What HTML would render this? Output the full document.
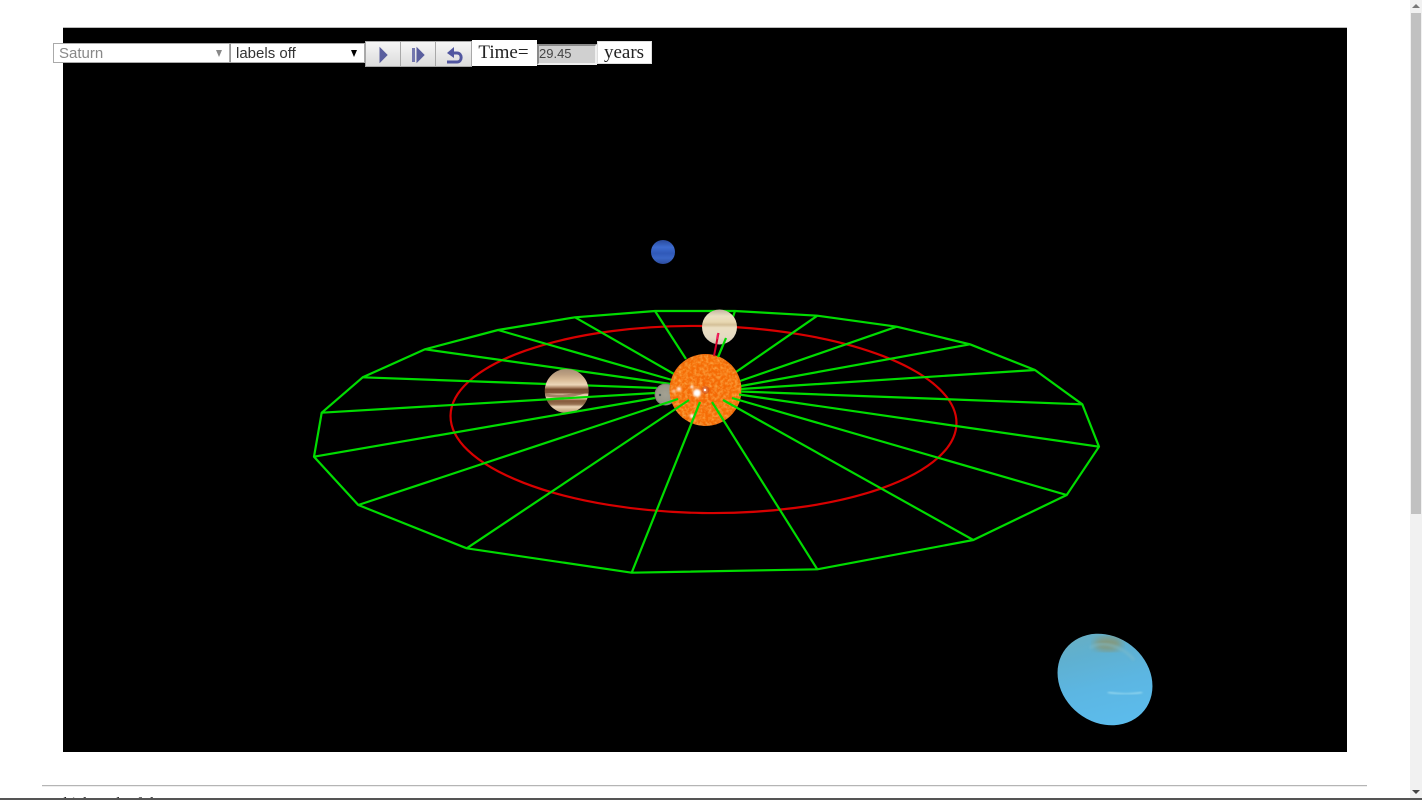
<!DOCTYPE html>
<html><head><meta charset="utf-8"><title>Solar system</title>
<style>
html,body{margin:0;padding:0;width:1422px;height:800px;overflow:hidden;background:#fff}
.a{position:absolute;box-sizing:border-box}
.sel{font:15px/20px "Liberation Sans",sans-serif;background:#fff;border:1px solid #aaa;height:20px;top:43px;padding-left:5px;color:#333}
.arr{position:absolute;top:6px;width:0;height:0;border-left:3.5px solid transparent;border-right:3.5px solid transparent;border-top:7px solid #000}
.btn{top:41px;height:26px;width:36px;background:linear-gradient(#f6f6f6,#dcdcdc);border:1px solid #a8a8a8}
.btn svg{position:absolute;left:0;top:0}
.lab{background:#fff;font:19px/24px "Liberation Serif",serif;color:#222;text-align:center}
</style></head><body>
<div class="a" style="left:63px;top:27px;width:1284px;height:1px;background:#bbb"></div>
<svg class="a" style="left:63px;top:28px;width:1284px;height:724px;background:#000;display:block" viewBox="63 28 1284 724" xmlns="http://www.w3.org/2000/svg">
<defs>
<filter id="sunf" x="0" y="0" width="100%" height="100%"><feTurbulence type="fractalNoise" baseFrequency="0.34" numOctaves="2" seed="4"/><feColorMatrix values="0 0 0 0 1  0 0 0 0 .6  0 0 0 0 .15  1.3 0 0 0 -.5"/></filter>
<radialGradient id="sung" cx=".5" cy=".5" r=".5"><stop offset="0" stop-color="#f46604"/><stop offset=".85" stop-color="#f66e06"/><stop offset="1" stop-color="#ee6806"/></radialGradient>
<clipPath id="sunc"><circle cx="705.5" cy="390" r="36"/></clipPath>
<clipPath id="jc"><circle cx="566.7" cy="391" r="22"/></clipPath>
<clipPath id="sc"><circle cx="719.5" cy="327" r="17.5"/></clipPath>
<clipPath id="uc"><ellipse cx="1105" cy="679.5" rx="50" ry="43" transform="rotate(38 1105 679.5)"/></clipPath>
<linearGradient id="jg" x1="0" y1="0" x2="0" y2="1">
<stop offset="0" stop-color="#a89078"/><stop offset=".12" stop-color="#bc9f80"/><stop offset=".24" stop-color="#d8ba96"/><stop offset=".36" stop-color="#ecd6b8"/><stop offset=".42" stop-color="#b08a6a"/><stop offset=".46" stop-color="#784c30"/><stop offset=".54" stop-color="#805438"/><stop offset=".58" stop-color="#e8d0b0"/><stop offset=".67" stop-color="#e0c4a2"/><stop offset=".72" stop-color="#84583a"/><stop offset=".8" stop-color="#967050"/><stop offset=".86" stop-color="#ecd6b8"/><stop offset="1" stop-color="#b09068"/>
</linearGradient>
<linearGradient id="sg" x1="0" y1="0" x2="0" y2="1">
<stop offset="0" stop-color="#bfb29c"/><stop offset=".2" stop-color="#ebe0c2"/><stop offset=".36" stop-color="#e8d8b2"/><stop offset=".44" stop-color="#d4c098"/><stop offset=".52" stop-color="#ebdfc2"/><stop offset=".8" stop-color="#e4d9c2"/><stop offset="1" stop-color="#cfc4b0"/>
</linearGradient>
<linearGradient id="ng" x1="0" y1="0" x2="0" y2="1">
<stop offset="0" stop-color="#2a4a9c"/><stop offset=".3" stop-color="#3e6cd0"/><stop offset=".55" stop-color="#3059b8"/><stop offset=".75" stop-color="#3a66c6"/><stop offset="1" stop-color="#2c4c9e"/>
</linearGradient>
<linearGradient id="ug" x1=".35" y1="0" x2=".6" y2="1">
<stop offset="0" stop-color="#6aaec0"/><stop offset=".25" stop-color="#5fb0d0"/><stop offset=".55" stop-color="#5cb6e2"/><stop offset="1" stop-color="#5cbdee"/>
</linearGradient>
<radialGradient id="mg" cx=".5" cy=".5" r=".5"><stop offset="0" stop-color="#a3a192"/><stop offset=".85" stop-color="#989688"/><stop offset="1" stop-color="#77776c"/></radialGradient>
<filter id="b1"><feGaussianBlur stdDeviation="3.5"/></filter>
<filter id="b2"><feGaussianBlur stdDeviation="1"/></filter>
</defs>
<g style="filter:blur(.3px)">
<ellipse cx="703.5" cy="419.5" rx="253" ry="93.5" transform="rotate(.9 703.5 419.5)" fill="none" stroke="#d80000" stroke-width="2.2"/>
<g stroke="#00dc00" stroke-width="2.2" fill="none" stroke-linejoin="round">
<polygon points="655,311 735,311 817.3,315.7 896.7,326.7 970,344.3 1035,370 1082.3,404.3 1099,446.7 1066.7,495 973.3,540 817.3,569.3 631.7,572.7 466.7,548.3 358.3,505 314,456.7 321.7,412.7 362.7,377.3 425,349.3 498,330 575,317.3"/>
<path d="M362.7,377.3L657,388M425,349.3L671,384M498,330L672,380M575,317.3L674,374M655,311L686,359M735,311L726,338L718,357M817.3,315.7L736,372M896.7,326.7L740,381M970,344.3L741,386M1035,370L741,389"/>
</g>
<g clip-path="url(#jc)">
<rect x="544" y="369" width="46" height="44" fill="url(#jg)"/>
<path d="M544,393C555,396 578,395 590,388L590,391C578,398 555,399 544,396Z" fill="#7c5238" opacity=".6"/>
</g>
<circle cx="665.5" cy="394.5" r="11" fill="url(#mg)"/>
<circle cx="660" cy="395" r="1.2" fill="#4a5a5a"/>
<circle cx="705.5" cy="390" r="36" fill="url(#sung)"/>
<g clip-path="url(#sunc)"><rect x="669" y="354" width="73" height="73" filter="url(#sunf)"/></g>
<g filter="url(#b2)" fill="#fff"><circle cx="697" cy="393" r="4"/><circle cx="705" cy="390" r="2"/><circle cx="679" cy="389" r="2"/><circle cx="692" cy="387" r="1.6"/><circle cx="692" cy="416" r="2"/><circle cx="674" cy="391" r="1.3"/></g>
<circle cx="705.5" cy="390" r="4" fill="#c83c08" opacity=".5"/>
<circle cx="705" cy="390" r="1.2" fill="#fff"/>
<g clip-path="url(#sc)">
<rect x="702" y="309" width="35" height="36" fill="url(#sg)"/>
</g>
<path d="M714,356L718.5,333" stroke="#d8002c" stroke-width="2"/>
<path d="M718,333.5L717,339" stroke="#f02060" stroke-width="2"/>
<path d="M718,357L726,338" stroke="#00dc00" stroke-width="2.2"/>
<g stroke="#00dc00" stroke-width="2.2" fill="none">
<path d="M321.7,412.7L655,393M314,456.7L655,398M358.3,505L678,399M466.7,548.3L689,400M631.7,572.7L700,402M817.3,569.3L712,402M973.3,540L723,400M1066.7,495L732,398M1099,446.7L739,394.5M1082.3,404.3L741,391.5"/>
</g>
<circle cx="663" cy="252" r="12" fill="url(#ng)"/>
<g clip-path="url(#uc)">
<rect x="1050" y="625" width="110" height="110" fill="url(#ug)"/>
<ellipse cx="1108" cy="644" rx="14" ry="7" fill="#8a9470" opacity=".85" filter="url(#b1)"/>
<path d="M1090,648C1100,640 1122,645 1134,660" stroke="#7ebccc" stroke-width="3" opacity=".5" fill="none" filter="url(#b2)"/>
<path d="M1108,692C1120,695 1132,695 1142,692" stroke="#92d6ee" stroke-width="2" fill="none" filter="url(#b2)"/>
</g>
</g>
</svg>

<div class="a sel" style="left:53px;width:177px;color:#888">Saturn<span class="arr" style="left:162px;border-top-color:#888"></span></div>
<div class="a sel" style="left:230px;width:135px;border-left-color:#999">labels off<span class="arr" style="left:120px"></span></div>

<div class="a btn" style="left:365px"><svg width="36" height="26"><path d="M14,6L14,20L21,13Z" fill="#5a5f9e" stroke="#5a5f9e"/></svg></div>
<div class="a btn" style="left:400px"><svg width="36" height="26"><path d="M11,6H14V20H11Z" fill="#7478ae"/><path d="M16,6V20L23,13Z" fill="#5a5f9e" stroke="#5a5f9e"/></svg></div>
<div class="a btn" style="left:435px;width:37px"><svg width="37" height="26"><path d="M18,5L11,11L18,16Z" fill="#5156a0"/><path d="M16,11H21C26.5,11 26.5,20 21,20H11" fill="none" stroke="#5156a0" stroke-width="3"/></svg></div>
<div class="a lab" style="left:472px;top:40px;width:65px;height:26px;line-height:25px;padding-right:2px">Time=</div>
<div class="a" style="left:537px;top:44px;width:60px;height:21px;background:#d0d0d0;border:2px solid;border-color:#8a8a8a #efefef #efefef #8a8a8a;font:13px/16px 'Liberation Sans',sans-serif;color:#444;padding-left:0">29.45</div>
<div class="a lab" style="left:597px;top:41px;width:55px;height:23px;border:1px solid #ddd;line-height:21px;padding-right:1px">years</div>

<div class="a" style="left:42px;top:785px;width:1325px;height:2px;background:linear-gradient(#b5b5b5 50%,#eee 50%)"></div>
<div class="a" style="left:52px;top:795px;height:3px;width:400px;overflow:hidden"><div style="font:16px/20px 'Liberation Serif',serif;color:#222;margin-top:-1px;white-space:nowrap">which each of the</div></div>

<div class="a" style="left:1410px;top:0;width:12px;height:798px;background:#f1f1f1"></div>
<div class="a" style="left:1411px;top:13px;width:10px;height:501px;background:#c1c1c1"></div>
<div class="a" style="left:1412px;top:4px;width:0;height:0;border-left:4px solid transparent;border-right:4px solid transparent;border-bottom:4px solid #777"></div>
<div class="a" style="left:1412px;top:790px;width:0;height:0;border-left:4px solid transparent;border-right:4px solid transparent;border-top:4px solid #444"></div>
<div class="a" style="left:0;top:798px;width:1422px;height:2px;background:#555"></div>
</body></html>
